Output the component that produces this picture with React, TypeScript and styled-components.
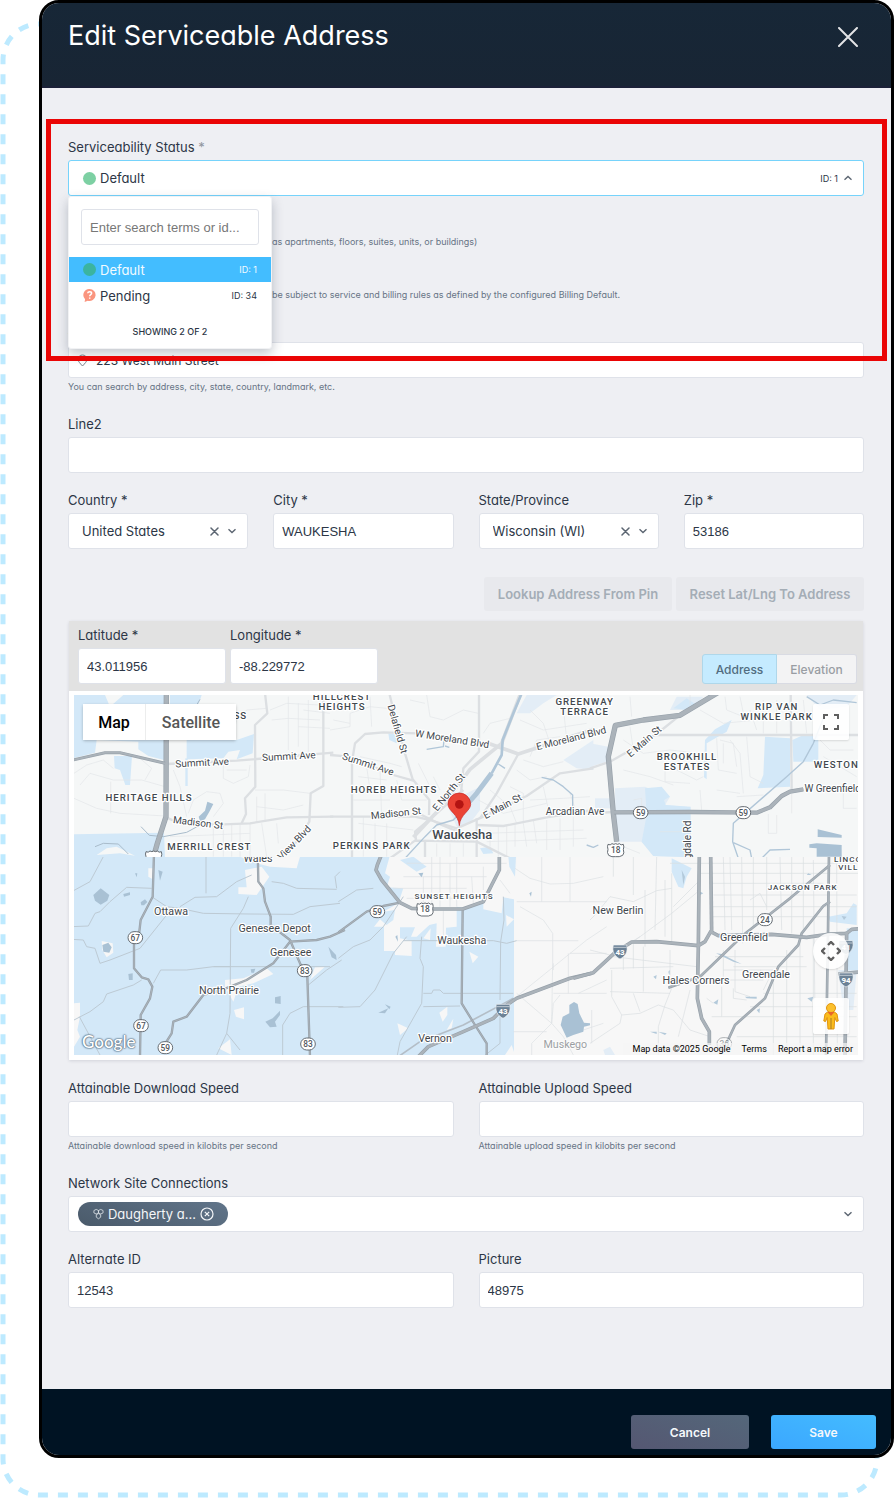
import React from 'react';
import styled, { createGlobalStyle } from 'styled-components';

const uiFont = `Inter, "Open Sans", sans-serif`;
const inputFont = `"Liberation Sans", Arial, sans-serif`;
const mapFont = `Roboto, Arial, sans-serif`;

const GlobalStyle = createGlobalStyle`
  * { box-sizing: border-box; }
  body { margin: 0; background: #ffffff; font-family: ${uiFont}; font-size: 13px; color: #2c3646; font-feature-settings: 'cv11'; }
  button, input, select { font: inherit; font-feature-settings: inherit; color: inherit; margin: 0; }
  button { cursor: pointer; }
`;

const Page = styled.div`
  position: relative;
  padding: 0 0 40px 39px;
`;

const Dashes = styled.svg`
  position: absolute;
  left: 0;
  top: 21px;
  width: calc(100% - 14px);
  height: calc(100% - 21px);
  rect {
    x: 3px;
    y: 3px;
    width: calc(100% - 6px);
    height: calc(100% - 6px);
    fill: none;
    stroke: #bdeaff;
    stroke-width: 5px;
    stroke-dasharray: 10 10;
  }
`;

const Modal = styled.section`
  position: relative;
  border: 3px solid #000;
  border-radius: 20px;
  background: #eeeff3;
  overflow: hidden;
`;

const Header = styled.header`
  display: flex;
  justify-content: space-between;
  align-items: flex-start;
  height: 85px;
  padding: 16px 27px 0 26px;
  background: linear-gradient(#172737, #182534);
  border-bottom: 2px solid #1b2138;
`;

const Title = styled.h1`
  margin: 0;
  color: #fff;
  font-size: 27px;
  line-height: 34px;
  font-weight: 400;
`;

const IconButton = styled.button`
  display: flex;
  padding: 0;
  border: 0;
  background: none;
  color: #5c6672;
`;

const CloseButton = styled(IconButton)`
  padding: 8px 6px;
  color: #e3e4e6;
`;

const Form = styled.form`
  position: relative;
  display: flex;
  flex-direction: column;
  gap: 18px;
  padding: 50px 27px 81px 26px;
`;

const Highlight = styled.div`
  position: absolute;
  z-index: 3;
  top: 31px;
  left: 4px;
  right: 4px;
  height: 242px;
  border: 5px solid #ea0505;
  pointer-events: none;
`;

const Field = styled.div`
  position: relative;
  display: flex;
  flex-direction: column;
  min-width: 0;
`;

const Label = styled.label`
  height: 22px;
  line-height: 18px;
  white-space: nowrap;
`;

const Star = styled.span`
  color: #8f959d;
`;

const Hint = styled.small<{ $indent?: boolean }>`
  padding: 0 0 2px ${p => (p.$indent ? 204 : 0)}px;
  font-size: 9px;
  line-height: 17px;
  color: #677485;
`;

const TextInput = styled.input`
  width: 100%;
  height: 36px;
  padding: 0 8px;
  border: 1px solid #dfe2e9;
  border-radius: 3px;
  background: #fff;
  font-family: ${inputFont};
  font-size: 13px;
  outline: none;
  &::placeholder { color: #777; opacity: 1; }
`;

const ControlBox = styled.div`
  display: flex;
  align-items: center;
  gap: 8px;
  height: 36px;
  padding: 0 10px 0 13px;
  border: 1px solid #dfe2e9;
  border-radius: 3px;
  background: #fff;
  color: #6a7480;
`;

const AddressBox = styled(ControlBox)`
  padding-left: 8px;
`;

const Select = styled.select`
  flex: 1;
  min-width: 0;
  height: 34px;
  padding: 0;
  border: 0;
  appearance: none;
  background: none;
  color: #2c3646;
  outline: none;
`;

const AddressInput = styled.input`
  flex: 1;
  min-width: 0;
  height: 34px;
  padding: 0;
  border: 0;
  background: none;
  color: #2c3646;
  font-size: 12px;
  outline: none;
`;

const StatusButton = styled.button`
  display: flex;
  align-items: center;
  height: 36px;
  padding: 0 10px 0 14px;
  border: 1px solid #76d3fb;
  border-radius: 3px;
  background: #fff;
  text-align: left;
`;

const Dot = styled.span<{ $color: string }>`
  width: 13px;
  height: 13px;
  margin-right: 4px;
  border-radius: 50%;
  background: ${p => p.$color};
`;

const Grow = styled.span`
  flex: 1;
`;

const IdTag = styled.span`
  font-size: 9px;
`;

const Menu = styled.div`
  position: absolute;
  z-index: 2;
  top: 58px;
  left: 0;
  width: 204px;
  background: #fff;
  border: 1px solid #f1f2f4;
  border-radius: 3px;
  box-shadow: 0 5px 12px rgba(40, 55, 75, 0.28);
`;

const SearchWrap = styled.div`
  padding: 12px;
`;

const OptionList = styled.ul`
  margin: 0;
  padding: 0;
  list-style: none;
`;

const Option = styled.li<{ $active?: boolean }>`
  display: flex;
  align-items: center;
  height: 26px;
  padding: 0 14px;
  border-bottom: 1px solid #fff;
  background: ${p => (p.$active ? '#43bdff' : '#fff')};
  color: ${p => (p.$active ? '#f2fbff' : '#2c3646')};
  svg { margin-right: 4px; }
`;

const Showing = styled.div`
  padding: 14px 0 7px;
  text-align: center;
  font-size: 9px;
  line-height: 18px;
  font-weight: 500;
`;

const ToggleGroup = styled.div`
  display: flex;
  flex-direction: column;
  gap: 15px;
`;

const ToggleRow = styled.div`
  display: flex;
  align-items: center;
  height: 19px;
  input { width: 12px; height: 12px; accent-color: #43aee8; }
`;

const Grid = styled.div<{ $columns: number }>`
  display: grid;
  grid-template-columns: repeat(${p => p.$columns}, minmax(0, 1fr));
  column-gap: 25px;
`;

const MapSection = styled.div`
  display: flex;
  flex-direction: column;
  gap: 10px;
  padding: 10px 0 1px;
`;

const ButtonRow = styled.div`
  display: flex;
  justify-content: flex-end;
  gap: 4px;
`;

const FlatButton = styled.button`
  height: 34px;
  width: 188px;
  padding: 0;
  border: 0;
  border-radius: 3px;
  background: #e8e9ed;
  color: #a4adb6;
  font-weight: 600;
  font-feature-settings: normal;
  white-space: nowrap;
`;

const MapPanel = styled.div`
  margin: 0 1px;
  background: #fff;
  box-shadow: 0 1px 3px rgba(60, 70, 90, 0.16);
`;

const CoordBar = styled.div`
  display: flex;
  align-items: flex-end;
  gap: 4px;
  height: 70px;
  padding: 0 6px 7px 9px;
  background: #e2e2e2;
`;

const CoordField = styled(Field)`
  width: 148px;
`;

const Segments = styled.div`
  display: flex;
  margin-left: auto;
`;

const Segment = styled.button<{ $on?: boolean }>`
  height: 30px;
  width: ${p => (p.$on ? 75 : 80)}px;
  padding: 0;
  border: 1px solid ${p => (p.$on ? '#afd7ea' : '#d9dbe3')};
  border-left-width: ${p => (p.$on ? 1 : 0)}px;
  border-radius: ${p => (p.$on ? '3px 0 0 3px' : '0 3px 3px 0')};
  background: ${p => (p.$on ? '#c5ebff' : '#f3f3f4')};
  color: ${p => (p.$on ? '#526d80' : '#999da3')};
  font-size: 12px;
  font-weight: 500;
  font-feature-settings: normal;
`;

const MapView = styled.div`
  position: relative;
  margin: 0 5px;
  padding: 4px 0 5px;
  font-family: ${mapFont};
  font-feature-settings: normal;
`;

const MapSvg = styled.svg`
  display: block;
  width: 100%;
  height: 360px;
`;

const MapTypes = styled.div`
  position: absolute;
  top: 13px;
  left: 9px;
  display: flex;
  box-shadow: 0 1px 3px rgba(0, 0, 0, 0.25);
  border-radius: 2px;
`;

const MapType = styled.button<{ $on?: boolean }>`
  height: 36px;
  width: ${p => (p.$on ? 62 : 91)}px;
  padding: 0;
  border: 0;
  border-left: ${p => (p.$on ? '0' : '1px solid #eceded')};
  background: #fff;
  color: ${p => (p.$on ? '#000' : '#565656')};
  font-size: 16px;
  font-weight: 500;
`;

const MapTools = styled.div`
  position: absolute;
  top: 13px;
  right: 9px;
  bottom: 26px;
  display: flex;
  flex-direction: column;
  justify-content: space-between;
`;

const ToolStack = styled.div`
  display: flex;
  flex-direction: column;
  gap: 29px;
`;

const MapTool = styled.button<{ $round?: boolean }>`
  display: flex;
  align-items: center;
  justify-content: center;
  width: 36px;
  height: 36px;
  padding: 0;
  border: 0;
  border-radius: ${p => (p.$round ? '50%' : '2px')};
  background: rgba(255, 255, 255, 0.88);
  box-shadow: 0 1px 2px rgba(0, 0, 0, 0.12);
`;

const Credits = styled.div`
  position: absolute;
  right: 0;
  bottom: 5px;
  display: flex;
  gap: 11px;
  padding: 0 5px 0 10px;
  background: rgba(245, 245, 245, 0.7);
  font-size: 9px;
  line-height: 12px;
  color: #000;
  a { color: inherit; text-decoration: none; }
`;

const GoogleMark = styled.div`
  position: absolute;
  left: 8px;
  bottom: 6px;
  color: #fff;
  font: 500 17px/24px Lato, sans-serif;
  text-shadow: 0 0 1px #61788c, 0 0 1px #61788c, 0 0 2px #61788c, 0 0 2px #61788c;
`;

const Chip = styled.span`
  display: flex;
  align-items: center;
  gap: 4px;
  height: 24px;
  width: 150px;
  margin-left: -4px;
  padding: 0 14px 0 15px;
  border-radius: 12px;
  background: linear-gradient(20deg, #4a5a6a, #61758a);
  color: #f4f6f8;
  white-space: nowrap;
  ${IconButton} { margin-left: auto; color: #f4f6f8; }
`;

const OpenButton = styled(IconButton)`
  margin-left: auto;
`;

const Footer = styled.footer`
  display: flex;
  justify-content: flex-end;
  gap: 22px;
  padding: 26px 15px 6px;
  background: #001323;
`;

const ActionButton = styled.button<{ $primary?: boolean }>`
  height: 34px;
  width: ${p => (p.$primary ? 105 : 118)}px;
  border: 0;
  border-radius: 3px;
  background: ${p => (p.$primary ? 'linear-gradient(20deg, #3ba7ff, #44bcff)' : 'linear-gradient(20deg, #555772, #54677a)')};
  color: #f4f8fb;
  font-size: 12px;
  font-weight: 600;
  font-feature-settings: normal;
`;

const Chevron = ({ up }: { up?: boolean }) => (
  <svg width="10" height="10" viewBox="0 0 10 10" fill="none" stroke="#5c6672" strokeWidth="1.4" aria-hidden="true">
    <path d={up ? 'M1.5 6.8 5 3.5l3.5 3.3' : 'M1.5 3.2 5 6.5l3.5-3.3'} />
  </svg>
);

const Cross = ({ size = 9, weight = 1.5 }: { size?: number; weight?: number }) => (
  <svg width={size} height={size} viewBox={`0 0 ${size} ${size}`} stroke="currentColor" strokeWidth={weight} strokeLinecap="round" aria-hidden="true">
    <path d={`M1 1 ${size - 1} ${size - 1}M${size - 1} 1 1 ${size - 1}`} />
  </svg>
);

const PendingIcon = () => (
  <svg width="13" height="13" viewBox="0 0 13 13" aria-hidden="true">
    <path d="M6.5 0a6.2 6 0 1 1-1.7 11.8L1.6 13l.5-2.8A6 6 0 0 1 6.5 0Z" fill="#fa957f" />
    <path d="M4.7 4.3c.2-2.2 3.9-2.2 3.9 0 0 1.4-1.8 1.3-1.9 2.9M6.7 8.5v1.3" stroke="#fff" strokeWidth="1.5" fill="none" />
  </svg>
);

const PinIcon = () => (
  <svg width="11" height="13" viewBox="0 0 11 13" fill="none" stroke="#7a838d" aria-hidden="true">
    <path d="M5.5 12C3 9.3 1 7.3 1 5.2a4.5 4.2 0 0 1 9 0C10 7.3 8 9.3 5.5 12Z" />
    <circle cx="5.5" cy="5" r="1.5" />
  </svg>
);

type Pt = { x: number; y: number; t: string; r?: number };

const Roads = ({ d, w, c = '#dcdfe2' }: { d: string[]; w: number; c?: string }) => (
  <g fill="none" stroke={c} strokeWidth={w} strokeLinejoin="round">
    {d.map(p => <polyline key={p} points={p} />)}
  </g>
);

const Major = ({ d, w }: { d: string[]; w: number }) => (
  <>
    <Roads d={d} w={w} c="#98a2ab" />
    <Roads d={d} w={w - 4} c="#abb3ba" />
  </>
);

const Areas = ({ d, c = '#d3e8f8' }: { d: string[]; c?: string }) => (
  <g fill={c}>{d.map(p => <polygon key={p} points={p} />)}</g>
);

const Names = ({ items, size, weight = 400, spacing = 0 }: { items: Pt[]; size: number; weight?: number; spacing?: number }) => (
  <g fontSize={size} fontWeight={weight} letterSpacing={spacing} fill="#42484e" stroke="#fff" strokeWidth="7" strokeLinejoin="round" paintOrder="stroke" textAnchor="middle">
    {items.map(i => (
      <text key={i.t + i.x} x={i.x} y={i.y} transform={i.r ? `rotate(${i.r} ${i.x} ${i.y})` : undefined}>{i.t}</text>
    ))}
  </g>
);

const Shield = ({ x, y, n, us }: { x: number; y: number; n: string; us?: boolean }) => (
  <g>
    {us ? (
      <path d={`M${x - 23} ${y - 17}q7 4 12-2 6 4 11 0 6 4 11 0 5 6 12 2 3 8 0 15 4 12-2 18-10 6-21 4-12 2-21-4-6-8-2-18-3-8 0-15Z`} fill="#fff" stroke="#656c73" strokeWidth="3" />
    ) : (
      <rect x={x - 22} y={y - 18} width="44" height="36" rx="18" fill="#fff" stroke="#656c73" strokeWidth="3" />
    )}
    <text x={x} y={y + 9} fontSize="25" fontWeight="500" textAnchor="middle" fill="#50565c">{n}</text>
  </g>
);

const Interstate = ({ x, y, n }: { x: number; y: number; n: string }) => (
  <g>
    <path d={`M${x - 20} ${y - 20}h40c5 20-4 34-20 42-16-8-25-22-20-42Z`} fill="#6c8296" stroke="#f2f4f6" strokeWidth="2" />
    <path d={`M${x - 20} ${y - 13}h40`} stroke="#e8edf0" strokeWidth="2" />
    <text x={x} y={y + 9} fontSize="24" fontWeight="700" textAnchor="middle" fill="#fff">{n}</text>
  </g>
);

const WaukeshaMap = () => (
  <MapSvg viewBox="0 0 2352 1080" preserveAspectRatio="xMidYMid slice" role="img" fontFamily="Roboto, Arial, sans-serif">
    <defs>
      <clipPath id="north"><rect width="2352" height="486" /></clipPath>
      <clipPath id="south"><rect y="486" width="2352" height="594" /></clipPath>
    </defs>
    <g clipPath="url(#north)">
      <rect width="2352" height="486" fill="#f5f7f7" />
      <g transform="translate(-12 -15)">
        <Areas d={[
          '12,15 282,15 282,210 235,198 205,178 205,155 80,150 75,188 12,204',
          '132,198 186,198 180,285 166,285 150,240 134,235',
          '350,150 500,150 552,132 548,190 500,208 510,180 475,185 460,205 350,208',
          '346,205 353,205 353,288 346,288',
          '300,15 395,15 385,45 300,45',
          '12,433 282,428 285,502 12,502',
        ]} />
        <Areas c="#f5f7f7" d={['80,495 110,475 140,470 195,497 150,490', '105,15 160,15 120,50']} />
        <Areas c="#a9c1d4" d={['386,380 405,362 412,335 430,342 418,365 405,388 390,394']} />
        <Roads w={2} c="#e3e6e8" d={[
          '12,250 50,225 100,210 130,235', '12,325 80,355 150,370 285,378', '30,285 60,250 130,270 215,270 285,290', '122,275 122,370',
          '210,205 245,235 225,270', '310,240 330,290 350,380', '355,370 370,330 410,305 450,310 460,340 430,380',
          '460,225 460,265 490,280 535,260 540,225', '470,240 530,240', '555,300 640,300 720,310', '560,320 560,395', '585,310 585,395', '560,350 640,360 700,345',
          '600,60 650,40 750,45', '605,90 655,85 750,90', '655,20 655,180', '685,40 685,170', '715,30 715,190', '685,110 780,115', '700,60 780,70',
          '490,130 500,90 530,60 590,55', '430,400 430,500', '460,405 460,500', '485,405 485,500', '510,405 510,500', '300,440 540,430', '540,400 540,500', '575,400 590,500', '620,400 625,460',
        ]} />
        <Roads w={7} d={['290,222 500,212 790,188', '585,10 592,70 555,105 556,290 525,325 528,372 515,400', '760,10 760,288 722,310 718,395 680,455 620,510', '288,382 330,400 440,404 540,400 650,382 790,380']} />
        <Roads w={3} c="#a9bccb" d={['213,410 238,436 280,440 350,427 385,408', '75,470 100,460 145,462 175,492', '370,62 390,28']} />
        <Major w={16} d={['289,5 288,380 262,460 248,510']} />
        <Major w={9} d={['5,211 105,188 150,188 285,220']} />
      </g>
      <g transform="translate(768 -15)">
        <Areas c="#e3edf6" d={['590,15 680,15 640,40 600,70 560,70', '350,340 450,290 450,360 420,400 380,410', '700,210 790,150 790,240 740,235']} />
        <Areas d={['175,130 205,135 200,160 178,150', '450,475 480,470 490,490 460,492']} />
        <Roads w={2} c="#e3e6e8" d={[
          '0,120 60,110 60,70 120,50 170,55', '10,90 60,100', '70,20 70,60', '120,20 125,110', '290,15 300,80 340,90 400,60 445,70', '240,30 285,40',
          '90,200 180,220 215,230', '85,260 170,270', '110,230 120,300', '150,240 155,380', '265,220 300,290', '200,270 215,330 290,330', '70,330 180,330', '85,400 250,420',
          '100,380 100,500', '135,400 135,480', '170,400 170,500', '310,260 330,300', '460,130 480,100 540,85', '570,90 640,120 770,100', '600,60 640,100 660,160', '700,50 710,150',
          '580,210 640,230 700,215', '560,240 600,270 650,260', '540,290 580,310 580,400', '600,330 700,325 780,320', '640,290 660,380', '720,310 740,370',
          '480,420 480,470', '505,410 505,500', '530,405 530,500', '555,400 555,470', '580,400 590,470', '610,390 620,460', '650,390 650,480', '690,385 690,480', '730,380 730,470', '460,430 760,420', '470,455 770,445', '320,460 320,500', '360,460 360,500', '400,460 400,500',
          '445,330 520,370 650,340', '480,300 540,350 560,400', '600,200 620,150 690,140',
        ]} />
        <Roads w={7} d={[
          '178,10 195,80 225,190 248,268 298,330 297,375', '66,505 66,215 75,160 105,132 160,127 260,130', '447,10 447,185 400,235 393,310',
          '565,192 500,310 450,385', '0,195 60,200 190,255 250,272', '0,380 255,380 300,390 380,415 455,382 590,318 690,250 790,235', '440,405 520,408 650,382 790,360',
          '180,505 255,452 440,455 540,505', '285,455 285,505', '440,385 440,505', '262,368 335,405 420,440', '258,450 255,425 320,370 400,300',
        ]} />
        <Roads w={11} d={['572,10 515,160 420,238 340,345 250,442', '470,158 565,192 790,118']} />
        <Roads w={15} c="#b0c6d8" d={['485,250 440,310 405,350']} />
        <Roads w={8} c="#b0c6d8" d={['575,10 550,70 518,150 515,195 485,250']} />
        <Roads w={4} c="#b0c6d8" d={['405,352 370,390 320,405 285,440 225,505', '290,178 340,170 342,150', '505,222 525,235', '635,262 670,270 700,290 728,315 728,350', '345,168 358,172']} />
      </g>
      <g transform="translate(1548 -15)">
        <Areas c="#e3edf6" d={['75,295 165,290 240,320 225,345 290,350 290,500 190,498 155,455 78,455', '15,325 60,325 60,355 15,355', '0,160 55,170 50,215 0,230', '260,20 340,20 300,60 240,60', '650,15 800,15 770,50 690,60']} />
        <Areas d={[
          '165,295 215,290 240,320 222,330 227,345 302,350 302,502 190,498 155,455 170,375', '525,140 600,145 600,290 503,295 520,255', '607,150 640,135 685,130 685,215 610,215',
          '345,150 375,118 425,90 410,125 350,160 350,268 342,262', '250,55 290,25 320,45 290,60',
        ]} />
        <Roads w={2} c="#e3e6e8" d={[
          '100,150 160,190 240,180 330,190', '120,110 130,180', '380,145 385,240 440,250', '390,150 430,160 440,230', '400,160 400,220', '420,150 450,190 460,310', '470,140 480,260 520,280', '100,240 180,260 250,285', '225,235 225,275 300,280', '260,240 320,270 340,260',
          '120,20 125,80', '300,15 300,45', '330,60 400,100 500,90', '405,20 410,60 460,80', '450,20 460,70', '480,60 500,120', '520,30 520,130', '560,30 560,130', '440,320 520,315', '380,300 450,310', '130,330 155,325 155,355 130,355', '535,372 535,430 560,430 560,375', '605,310 605,370', '760,300 760,355 800,355', '210,425 290,425', '330,300 335,360', '690,150 720,180 790,180', '700,200 800,260', '640,30 650,130', '100,470 150,490',
        ]} />
        <Roads w={7} d={['0,235 60,215 165,155 215,120 262,82', '190,135 810,135', '602,10 605,300', '0,370 70,366']} />
        <Roads w={4} c="#b0c6d8" d={['700,85 670,160 640,215 590,260 430,400 428,455 445,505', '430,458 480,480 485,505', '515,505 540,480 600,478', '650,20 690,45 730,30 800,38', '-10,465 10,472 25,465']} />
        <Areas c="#a9c1d4" d={['683,418 755,435 755,443 683,441', '658,463 680,460 755,465 755,500 680,500 680,475 658,473']} />
        <Major w={16} d={['405,-5 270,76 160,90 76,106 55,200 70,370 80,455']} />
        <Major w={13} d={['72,367 300,366 500,368 540,352 575,318 600,305 640,298']} />
      </g>
    </g>
    <g clipPath="url(#south)">
      <rect y="486" width="2352" height="594" fill="#f7f7f7" />
      <rect y="486" width="1320" height="594" fill="#d3e8f8" />
      <g transform="translate(-12 525)">
        <Areas c="#f7f7f7" d={[
          '510,-40 690,-40 680,-5 600,-10 560,-20', '235,-5 250,-5 248,28 235,20', '525,0 575,-10 598,20 560,75 505,72 505,52 530,52', '95,213 128,220 130,248 110,262 97,240',
          '12,400 30,398 30,440 22,480 30,500 12,530', '465,330 520,325 590,295 610,312 550,340 505,350 490,395 465,350', '492,420 522,412 522,448 498,440', '735,292 765,290 720,330', '480,508 485,555 445,535',
        ]} />
        <Areas c="#a9c1d4" d={[
          '70,75 92,55 118,75 112,92 92,104 75,92', '160,72 180,67 180,75 162,80', '212,97 225,88 232,96 222,106 214,106', '97,225 115,218 125,232 118,248 100,245',
          '175,312 188,310 188,330 177,330', '542,298 556,296 552,308 544,308', '615,382 632,378 632,402 615,400', '586,455 608,445 630,422 630,435 615,455 620,470 600,472', '195,10 202,10 200,22', '265,0 278,5 270,32', '775,230 798,255 800,270 785,262',
        ]} />
        <Roads w={3} c="#bdcad4" d={[
          '5,170 55,168 75,130 90,125 120,95 170,52 245,55', '5,65 60,35 100,-40', '5,208 40,210 50,230 75,235 90,280 120,270 210,235 290,135', '248,82 290,110 330,115 400,130 540,132 670,133 720,110 810,100',
          '330,110 375,82 440,80 500,35 545,15', '408,70 408,-40', '605,35 640,40 680,55 800,58', '810,5 795,20 800,55', '535,80 520,115 482,175 480,430 470,490 440,555', '430,290 780,290', '215,330 190,345 110,372 100,395 60,425 12,450', '28,440 90,555', '250,340 272,300 350,300 430,290 480,290',
          '815,270 770,300 715,345', '700,410 820,410', '700,410 660,430 638,465 638,555', '470,490 510,540',
        ]} />
        <Major w={7} d={['252,-50 248,80 212,150 208,185 192,215 192,295 215,322 235,328 247,350 240,385 212,435 210,560', '563,-60 565,35 580,55 585,95 602,140 602,165 660,210 690,280 712,320 720,560', '825,180 780,200 740,210 660,215 610,280 530,330 460,358 400,375 350,440 310,455 305,490 280,530']} />
      </g>
      <g transform="translate(798 525)">
        <Areas c="#f7f7f7" d={[
          '150,-45 530,-45 530,-10 522,88 490,82 485,130 430,118 430,90 375,115 350,170 318,173 317,230 288,230 290,160 268,165 230,200 213,200 225,172 180,172 180,205 215,212 215,258 165,255 165,243 132,243 132,170 160,150 165,120 130,125 175,100 190,55 140,52 150,20 135,10',
          '102,170 120,148 145,170', '250,205 272,175 270,210', '388,245 415,260 398,280', '498,135 522,148 500,170', '298,428 322,410 322,435 308,455', '172,460 205,475 180,495', '320,480 340,446 335,475', '515,525 525,555 495,555',
        ]} />
        <Areas d={['350,110 390,115 388,170 350,170', '505,-40 528,-40 525,20 508,-10', '180,-30 220,-40 260,-10 230,5']} />
        <Roads w={2} c="#dde1e4" d={[
          '250,20 250,110', '275,-40 275,110', '300,-40 300,110', '330,-20 330,110', '350,-40 350,110', '160,55 380,55', '190,20 440,20', '200,-20 500,-20', '310,120 310,200', '395,20 400,100', '430,-10 430,60', '480,30 510,70', '200,85 350,85',
          '530,95 800,95', '605,-40 605,95', '525,-5 570,25 630,42 700,40 790,20', '540,110 610,150 638,190 638,280 635,460 530,370', '800,170 740,210 530,380', '690,-40 690,95', '530,212 715,212', '690,250 800,250', '640,370 800,370', '685,250 685,370', '575,520 635,460 640,400 660,375', '520,485 620,485', '635,460 670,500 700,555', '755,420 755,520', '575,520 575,560', '715,370 800,330', '700,490 790,460', '640,280 640,300',
        ]} />
        <Roads w={3} c="#bdcad4" d={['-5,265 40,230 90,210 130,170 190,80', '-5,412 60,410 105,360 160,250 200,200', '190,212 460,212 500,220 530,212', '245,200 240,265 250,290 245,400', '250,410 360,408', '250,370 275,370 280,360 300,360 310,370 520,370', '245,400 180,515 172,555', '490,80 492,150 482,215 480,390', '-5,95 50,60 100,55', '480,440 480,520 430,560']} />
        <Roads w={5} c="#b4bec7" d={['175,560 240,515 370,465 520,385']} />
        <Major w={7} d={['180,98 130,108 80,125 -5,187', '368,117 365,400 405,465 440,520 440,560']} />
        <Major w={11} d={['126,-50 112,-15 108,0 125,30 180,98 215,115 250,117 368,117 430,95 455,45 478,0 478,-50', '235,560 265,530 370,485 460,445 500,405 530,385 690,325 755,310']} />
        <Areas c="#a9c1d4" d={['688,405 702,396 713,402 718,430 732,458 750,460 750,466 732,470 730,485 700,495 680,503 662,465 668,440 688,430', '115,428 145,415 135,430', '135,403 152,410 148,418', '166,200 172,195 174,215', '568,70 575,65 573,80', '235,10 250,8 245,22']} />
      </g>
      <g transform="translate(1548 525)">
        <Areas d={['245,-35 305,-5 290,20 280,55 265,50 245,5', '715,140 770,130 790,100 800,105 800,165 720,155', '770,175 805,175 805,300 770,300']} />
        <Areas c="#e3edf6" d={['40,540 60,530 75,555 45,555', '745,300 800,300 790,420 760,420']} />
        <Roads w={2} c="#dadee1" d={[
          '70,-40 70,20', '130,-40 130,75', '165,60 165,230', '200,-40 195,180', '225,30 225,200', '245,10 245,225', '400,-40 405,180', '420,-40 425,180', '455,-40 458,220', '490,-40 490,170', '530,-40 530,120', '570,-40 575,180', '605,-40 605,190', '640,-40 640,180', '670,-30 675,440', '740,-40 742,555',
          '240,-20 800,-20', '330,10 810,10', '360,40 700,40', '370,75 800,75', '365,110 800,110', '365,140 720,140', '60,80 130,95 200,62 245,55', '60,80 20,130 0,150', '0,240 60,255 150,200', '100,235 100,300', '130,220 130,295', '160,230 160,365', '240,240 240,355', '70,260 320,290', '60,295 250,290', '60,365 240,370', '130,370 150,425', '65,300 65,380 95,435 90,460 30,500 0,520', '95,435 150,430 205,405 250,420 300,480 360,500', '245,355 225,405 205,470 205,555', '300,360 265,500', '400,240 400,320', '435,240 435,365 480,380', '375,260 640,260', '430,290 650,290', '370,330 520,330', '395,350 395,440', '430,355 430,385 470,390', '550,330 550,555', '590,240 590,555', '630,210 630,555', '670,200 670,555', '400,300 560,300', '365,440 800,440', '520,370 800,370', '480,410 800,410', '440,500 800,500', '350,385 370,400', '510,300 540,320 520,360', '480,90 510,70 530,110', '250,110 330,30', '130,215 245,130 330,60',
        ]} />
        <Areas c="#b3c9da" d={['378,250 395,252 430,270 455,282 430,275', '465,380 500,380 500,386 470,385', '370,398 385,388 382,404', '500,420 510,415 508,430', '180,485 200,485 200,492', '205,485 230,490 225,495', '652,385 670,380 665,395', '655,10 665,15 650,15', '755,138 770,140 762,150', '275,0 285,20 280,45', '190,320 200,315 198,328', '235,305 240,300 238,318', '320,60 340,70 330,75']} />
        <Major w={8} d={['235,353 330,320 460,195 600,85 720,-15', '720,95 700,108 635,190 625,225 565,290 525,385 435,465 412,515', '717,-50 714,190 708,555']} />
        <Major w={11} d={['-50,325 10,308 75,248 125,216 200,215 325,227 345,215 362,185 385,197 545,193 650,202 720,192 770,190 785,178 810,176', '328,-50 325,230 322,385 335,445 358,485 358,525', '362,-50 365,190', '770,185 765,560', '745,312 810,306']} />
      </g>
    </g>
    <Names size={30} items={[{ x: 385, y: 213, t: 'Summit Ave', r: -3 }, { x: 645, y: 194, t: 'Summit Ave', r: -3 }, { x: 371, y: 393, t: 'Madison St', r: 7 }, { x: 879, y: 217, t: 'Summit Ave', r: 18 }, { x: 967, y: 365, t: 'Madison St', r: -6 }, { x: 961, y: 105, t: 'Delafield St', r: 74 }, { x: 1133, y: 142, t: 'W Moreland Blvd', r: 9 }, { x: 1494, y: 140, t: 'E Moreland Blvd', r: -14 }, { x: 1132, y: 298, t: 'E North St', r: -51 }, { x: 1290, y: 343, t: 'E Main St', r: -28 }, { x: 1717, y: 147, t: 'E Main St', r: -41 }, { x: 1503, y: 359, t: 'Arcadian Ave' }, { x: 2276, y: 292, t: 'W Greenfield' }]} />
    <g clipPath="url(#north)">
      <Names size={30} items={[{ x: 668, y: 450, t: 'View Blvd', r: -46 }, { x: 1850, y: 435, t: 'gdale Rd', r: -90 }]} />
    </g>
    <Names size={29} weight={500} spacing={3} items={[
      { x: 225, y: 318, t: 'HERITAGE HILLS' }, { x: 406, y: 464, t: 'MERRILL CREST' }, { x: 804, y: 16, t: 'HILLCREST' }, { x: 804, y: 44, t: 'HEIGHTS' }, { x: 499, y: 73, t: 'SS' },
      { x: 960, y: 295, t: 'HOREB HEIGHTS' }, { x: 893, y: 461, t: 'PERKINS PARK' }, { x: 1532, y: 31, t: 'GREENWAY' }, { x: 1532, y: 61, t: 'TERRACE' },
      { x: 1839, y: 196, t: 'BROOKHILL' }, { x: 1839, y: 225, t: 'ESTATES' }, { x: 2108, y: 45, t: 'RIP VAN' }, { x: 2108, y: 74, t: 'WINKLE PARK' }, { x: 2287, y: 220, t: 'WESTON' },
    ]} />
    <g clipPath="url(#south)">
      <Names size={24} weight={500} spacing={3} items={[{ x: 1140, y: 613, t: 'SUNSET HEIGHTS' }, { x: 2186, y: 585, t: 'JACKSON PARK' }, { x: 2340, y: 500, t: 'LINCOLN' }, { x: 2350, y: 525, t: 'VILLAGE' }]} />
      <Names size={32} items={[
        { x: 552, y: 500, t: 'Wales' }, { x: 291, y: 659, t: 'Ottawa' }, { x: 602, y: 710, t: 'Genesee Depot' }, { x: 650, y: 782, t: 'Genesee' }, { x: 465, y: 896, t: 'North Prairie' },
        { x: 1163, y: 747, t: 'Waukesha' }, { x: 1083, y: 1042, t: 'Vernon' }, { x: 1632, y: 656, t: 'New Berlin' }, { x: 2010, y: 737, t: 'Greenfield' }, { x: 1866, y: 867, t: 'Hales Corners' }, { x: 2076, y: 850, t: 'Greendale' },
      ]} />
      <g opacity="0.5"><Names size={32} items={[{ x: 1474, y: 1058, t: 'Muskego' }]} /></g>
    </g>
    <g clipPath="url(#north)"><Shield x={239} y={487} n="" us /></g>
    <Shield x={1700} y={353} n="59" /><Shield x={2008} y={353} n="59" /><Shield x={1625} y={465} n="18" us />
    <Shield x={184} y={728} n="67" /><Shield x={201} y={992} n="67" /><Shield x={274} y={1058} n="59" /><Shield x={692} y={827} n="83" /><Shield x={702} y={1047} n="83" />
    <Shield x={910} y={650} n="59" /><Shield x={1053} y={643} n="18" us /><Shield x={2073} y={674} n="24" />
    <g opacity="0.5"><Shield x={1951} y={1046} n="36" /></g>
    <Interstate x={1287} y={948} n="43" /><Interstate x={1638} y={770} n="43" /><Interstate x={2316} y={757} n="41" /><Interstate x={2316} y={854} n="94" />
    <Names size={39} weight={500} items={[{ x: 1165, y: 431, t: 'Waukesha' }]} />
    <path d="M1156 392C1154 358 1122 348 1122 328a34 34 0 0 1 68 0c0 20-32 30-34 64Z" fill="#ea4335" stroke="#c5221f" strokeWidth="2" />
    <circle cx="1156" cy="328" r="13" fill="#b31412" />
  </MapSvg>
);

export default function App() {
  return (
    <>
      <GlobalStyle />
      <Page>
        <Dashes aria-hidden="true"><rect rx="36" strokeDashoffset="-7" /></Dashes>
        <Modal>
          <Header>
            <Title>Edit Serviceable Address</Title>
            <CloseButton type="button" aria-label="Close"><Cross size={20} weight={2} /></CloseButton>
          </Header>
          <Form>
            <Highlight />
            <Field>
              <Label htmlFor="status">Serviceability Status <Star>*</Star></Label>
              <StatusButton id="status" type="button" role="combobox" aria-expanded="true" aria-controls="status-list">
                <Dot $color="#7dd0a3" /><Grow>Default</Grow><IdTag>ID: 1&nbsp;&nbsp;</IdTag><Chevron up />
              </StatusButton>
              <Menu>
                <SearchWrap><TextInput aria-label="Search statuses" placeholder="Enter search terms or id..." /></SearchWrap>
                <OptionList id="status-list" role="listbox">
                  <Option role="option" aria-selected="true" $active><Dot $color="#3bb4a0" /><Grow>Default</Grow><IdTag>ID: 1</IdTag></Option>
                  <Option role="option" aria-selected="false"><PendingIcon /><Grow>Pending</Grow><IdTag>ID: 34</IdTag></Option>
                </OptionList>
                <Showing>SHOWING 2 OF 2</Showing>
              </Menu>
            </Field>
            <ToggleGroup>
              <Field>
                <ToggleRow><input type="checkbox" defaultChecked aria-label="Has sub-addresses" aria-describedby="units-hint" /></ToggleRow>
                <Hint id="units-hint" $indent>as apartments, floors, suites, units, or buildings)</Hint>
              </Field>
              <Field>
                <ToggleRow><input type="checkbox" aria-label="Billing rules" aria-describedby="billing-hint" /></ToggleRow>
                <Hint id="billing-hint" $indent>be subject to service and billing rules as defined by the configured Billing Default.</Hint>
              </Field>
              <Field>
                <Label htmlFor="address">Address *</Label>
                <AddressBox>
                  <PinIcon /><AddressInput id="address" defaultValue="223 West Main Street" />
                </AddressBox>
                <Hint>You can search by address, city, state, country, landmark, etc.</Hint>
              </Field>
            </ToggleGroup>
            <Field>
              <Label htmlFor="line2">Line2</Label>
              <TextInput id="line2" />
            </Field>
            <Grid $columns={4}>
              <Field>
                <Label htmlFor="country">Country *</Label>
                <ControlBox>
                  <Select id="country"><option>United States</option></Select>
                  <IconButton type="button" aria-label="Clear country"><Cross /></IconButton><Chevron />
                </ControlBox>
              </Field>
              <Field>
                <Label htmlFor="city">City *</Label>
                <TextInput id="city" defaultValue="WAUKESHA" />
              </Field>
              <Field>
                <Label htmlFor="state">State/Province</Label>
                <ControlBox>
                  <Select id="state"><option>Wisconsin (WI)</option></Select>
                  <IconButton type="button" aria-label="Clear state"><Cross /></IconButton><Chevron />
                </ControlBox>
              </Field>
              <Field>
                <Label htmlFor="zip">Zip *</Label>
                <TextInput id="zip" defaultValue="53186" />
              </Field>
            </Grid>
            <MapSection>
              <ButtonRow>
                <FlatButton type="button">Lookup Address From Pin</FlatButton>
                <FlatButton type="button">Reset Lat/Lng To Address</FlatButton>
              </ButtonRow>
              <MapPanel>
                <CoordBar>
                  <CoordField><Label htmlFor="lat">Latitude *</Label><TextInput id="lat" defaultValue="43.011956" /></CoordField>
                  <CoordField><Label htmlFor="lng">Longitude *</Label><TextInput id="lng" defaultValue="-88.229772" /></CoordField>
                  <Segments>
                    <Segment type="button" $on>Address</Segment>
                    <Segment type="button">Elevation</Segment>
                  </Segments>
                </CoordBar>
                <MapView>
                  <WaukeshaMap />
                  <MapTypes>
                    <MapType type="button" $on>Map</MapType>
                    <MapType type="button">Satellite</MapType>
                  </MapTypes>
                  <MapTools>
                    <MapTool type="button" aria-label="Full screen">
                      <svg width="16" height="16" viewBox="0 0 16 16" fill="none" stroke="#5f5f5f" strokeWidth="2"><path d="M1 5V1h4M11 1h4v4M15 11v4h-4M5 15H1v-4" /></svg>
                    </MapTool>
                    <ToolStack>
                      <MapTool type="button" $round aria-label="Pan the map">
                        <svg width="20" height="20" viewBox="0 0 20 20" fill="none" stroke="#5f5f5f" strokeWidth="2.4"><path d="M7 4l3-3 3 3M16 7l3 3-3 3M13 16l-3 3-3-3M4 13l-3-3 3-3" /></svg>
                      </MapTool>
                      <MapTool type="button" aria-label="Street view">
                        <svg width="16" height="27" viewBox="0 0 16 27"><path d="M4.5 9 2 11 .8 18l1.7.5 1.7-4L5 26h6l.8-11.5 1.7 4 1.7-.5L14 11l-2.5-2Z" fill="#fbbc1c" stroke="#e09410" /><path d="M8 15v11" stroke="#a87a25" /><circle cx="8" cy="5" r="4.5" fill="#fbc02d" stroke="#e09410" /><path d="m4.5 9 3.5 4 3.5-4Z" fill="#e8662c" /></svg>
                      </MapTool>
                    </ToolStack>
                  </MapTools>
                  <GoogleMark>Google</GoogleMark>
                  <Credits><span>Map data ©2025 Google</span><a href="#terms">Terms</a><a href="#report">Report a map error</a></Credits>
                </MapView>
              </MapPanel>
            </MapSection>
            <Grid $columns={2}>
              <Field>
                <Label htmlFor="down">Attainable Download Speed</Label>
                <TextInput id="down" />
                <Hint>Attainable download speed in kilobits per second</Hint>
              </Field>
              <Field>
                <Label htmlFor="up">Attainable Upload Speed</Label>
                <TextInput id="up" />
                <Hint>Attainable upload speed in kilobits per second</Hint>
              </Field>
            </Grid>
            <Field>
              <Label htmlFor="sites">Network Site Connections</Label>
              <ControlBox>
                <Chip>
                  <svg width="12" height="12" viewBox="0 0 12 12" fill="none" stroke="#dde3e8" strokeWidth="0.9" aria-hidden="true"><path d="M3.5 1 6 2.2v2.6L3.5 6 1 4.8V2.2ZM8.5 1 11 2.2v2.6L8.5 6 6 4.8V2.2ZM6 5.5l2.4 1.3v2.7L6 11.2 3.6 9.5V6.8Z" /></svg>
                  Daugherty a...
                  <IconButton type="button" aria-label="Remove site">
                    <svg width="14" height="14" viewBox="0 0 14 14" fill="none" stroke="currentColor" strokeWidth="1.2"><circle cx="7" cy="7" r="6" /><path d="m4.8 4.8 4.4 4.4M9.2 4.8 4.8 9.2" /></svg>
                  </IconButton>
                </Chip>
                <OpenButton id="sites" type="button" aria-haspopup="listbox"><Chevron /></OpenButton>
              </ControlBox>
            </Field>
            <Grid $columns={2}>
              <Field>
                <Label htmlFor="alt">Alternate ID</Label>
                <TextInput id="alt" defaultValue="12543" />
              </Field>
              <Field>
                <Label htmlFor="picture">Picture</Label>
                <TextInput id="picture" defaultValue="48975" />
              </Field>
            </Grid>
          </Form>
          <Footer>
            <ActionButton type="button">Cancel</ActionButton>
            <ActionButton type="submit" $primary>Save</ActionButton>
          </Footer>
        </Modal>
      </Page>
    </>
  );
}
